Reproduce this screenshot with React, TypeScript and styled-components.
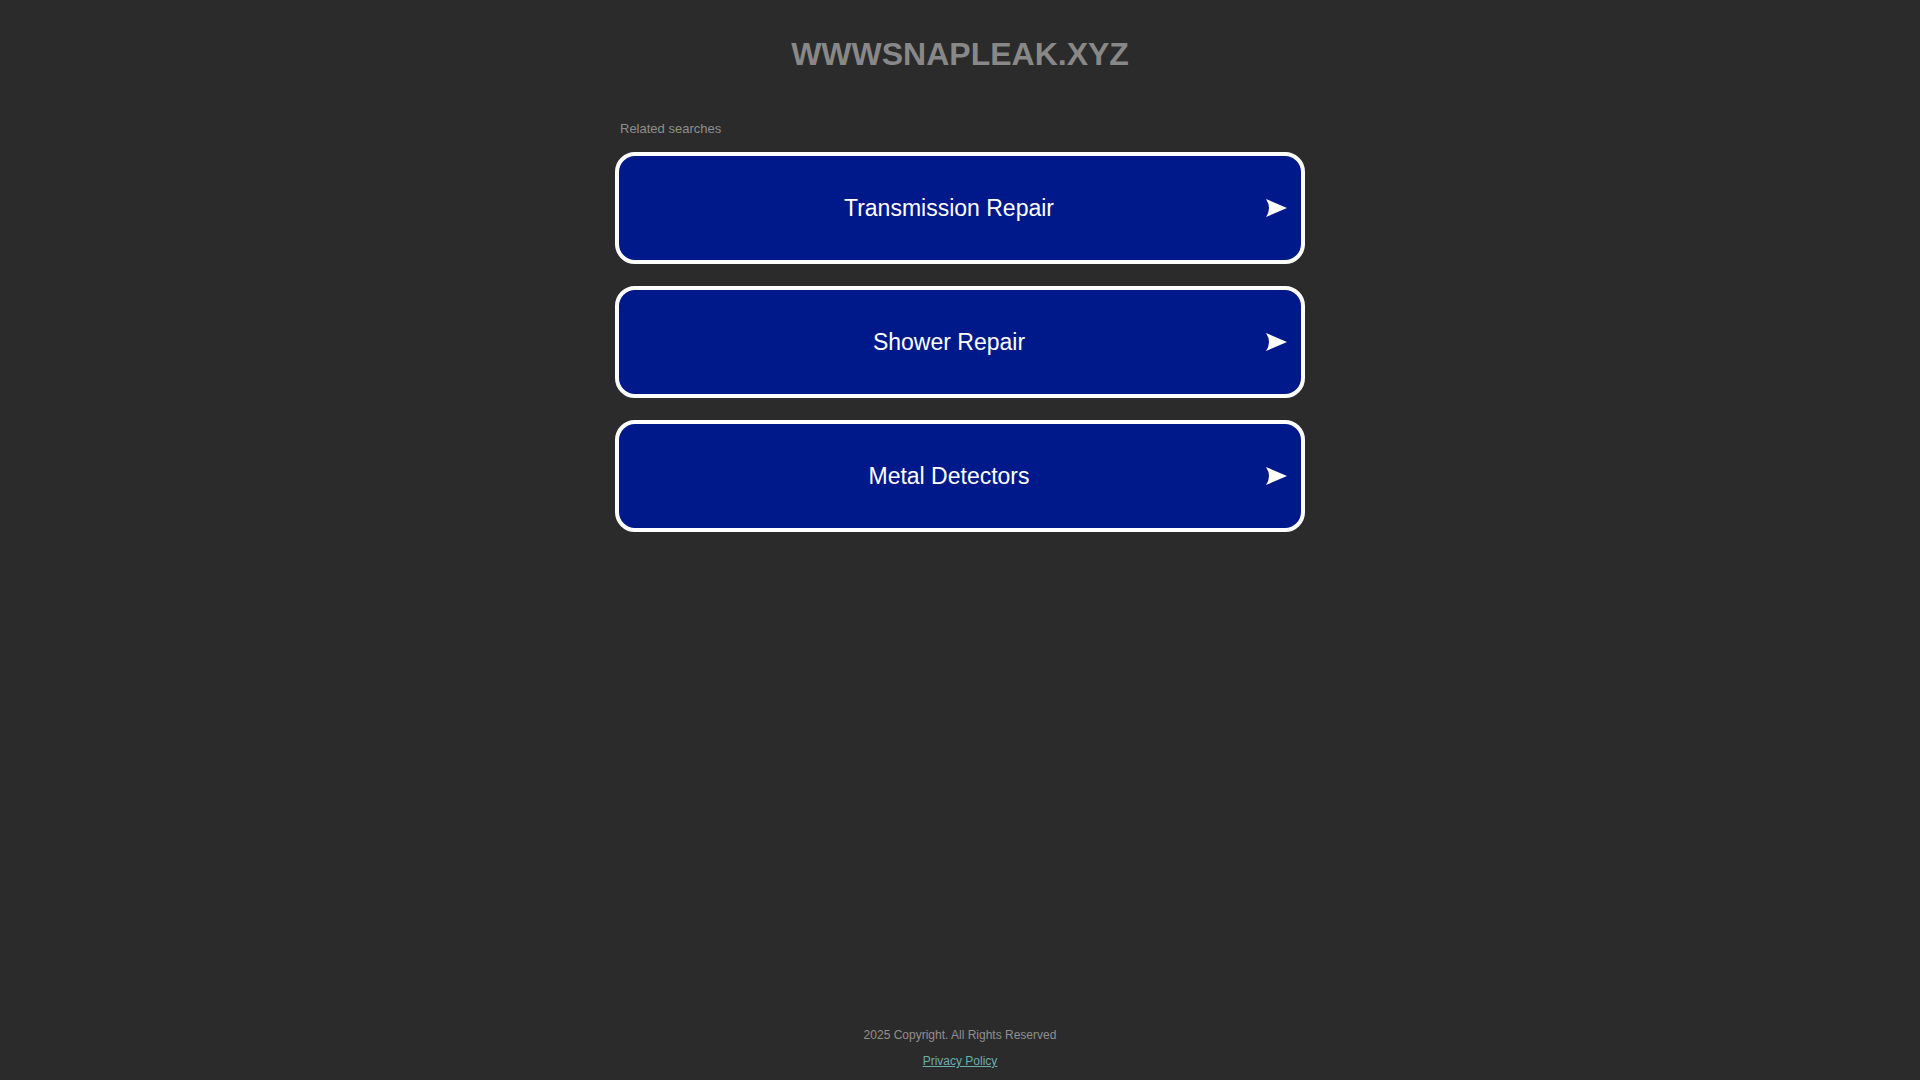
import React from 'react'
import styled, { createGlobalStyle } from 'styled-components'

const GlobalStyle = createGlobalStyle`
  html, body {
    margin: 0;
    padding: 0;
    background: #2b2b2b;
    font-family: 'Liberation Sans', Arial, sans-serif;
  }
`

const Page = styled.div`
  min-height: 1080px;
  display: flex;
  flex-direction: column;
  align-items: center;
`

const Domain = styled.h1`
  margin: 36px 0 0;
  font-size: 32px;
  font-weight: 700;
  line-height: 37px;
  color: #888888;
  text-align: center;
`

const Content = styled.main`
  width: 690px;
  margin-top: 48px;
  display: flex;
  flex-direction: column;
  flex: 1;
`

const Related = styled.div`
  font-size: 13px;
  line-height: 15px;
  color: #8f8f8f;
  padding-left: 5px;
  margin-bottom: 16px;
`

const List = styled.div`
  display: flex;
  flex-direction: column;
  gap: 22px;
`

const Card = styled.a`
  box-sizing: border-box;
  height: 112px;
  display: flex;
  align-items: center;
  padding-right: 14px;
  background: #00198a;
  border: 4px solid #ffffff;
  border-radius: 20px;
  text-decoration: none;
  cursor: pointer;
`

const Label = styled.span`
  flex: 1;
  padding-left: 13px;
  text-align: center;
  font-size: 23px;
  color: #ffffff;
`

const Arrow = styled.svg`
  width: 21px;
  height: 18px;
  flex-shrink: 0;
`

const Footer = styled.footer`
  display: flex;
  flex-direction: column;
  align-items: center;
  gap: 12px;
  padding-bottom: 12px;
  font-size: 12px;
  line-height: 14px;
`

const Copy = styled.div`
  color: #8f8f8f;
`

const Policy = styled.a`
  color: #6aaeae;
  text-decoration: underline;
`

const searches = ['Transmission Repair', 'Shower Repair', 'Metal Detectors']

const ArrowIcon = () => (
  <Arrow viewBox="0 0 21 18">
    <path d="M0 0 L21 9 L0 18 Q6 9 0 0 Z" fill="#ffffff" />
  </Arrow>
)

export default function App() {
  return (
    <>
      <GlobalStyle />
      <Page>
        <Domain>WWWSNAPLEAK.XYZ</Domain>
        <Content>
          <Related>Related searches</Related>
          <List>
            {searches.map((s) => (
              <Card key={s}>
                <Label>{s}</Label>
                <ArrowIcon />
              </Card>
            ))}
          </List>
        </Content>
        <Footer>
          <Copy>2025 Copyright. All Rights Reserved</Copy>
          <Policy href="#">Privacy Policy</Policy>
        </Footer>
      </Page>
    </>
  )
}
